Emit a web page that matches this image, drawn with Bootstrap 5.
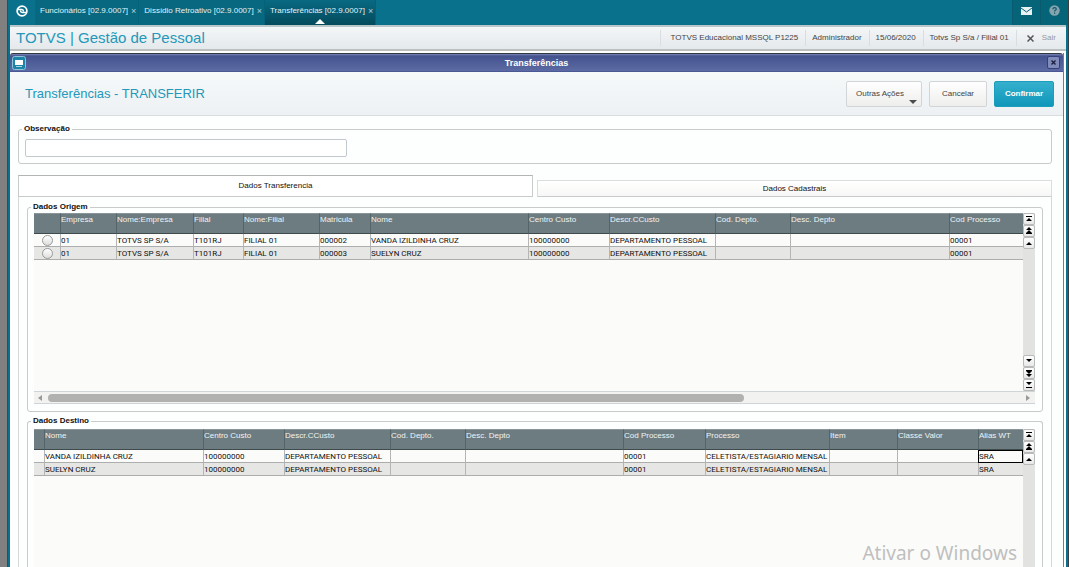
<!DOCTYPE html>
<html lang="pt-BR">
<head>
<meta charset="utf-8">
<meta name="viewport" content="width=device-width, initial-scale=1">
<title>TOTVS | Gestão de Pessoal</title>
<link href="https://cdn.jsdelivr.net/npm/bootstrap@5.3.0/dist/css/bootstrap.min.css" rel="stylesheet">
<style>
  body { font: 8px/10px "Liberation Sans", Arial, sans-serif; color: #222; background: #808080; }
  button { font: inherit; color: inherit; padding: 0; border: 0; background: none; }
  .shell { margin-left: 7px; border-left: 1px solid #3b4a50; border-right: 1px solid #3a3f42; }
  .frame { border: 2px solid #07708c; border-width: 0 2px; background: #fdfefe; }

  /* top bar with the open routines */
  .topbar { height: 25px; margin: 0 -2px; background: #0a718c; color: #e4f2f5; }
  .topbar .logo { width: 27px; }
  .routine { padding: 0 2px 3px 5px; border-right: 1px solid #05627b; background: #08687f; white-space: nowrap; }
  .routine .x { color: #b5d3db; margin-left: 3px; font-size: 9px; }
  .routine.on { background: linear-gradient(#086a82, #044a5c); }
  .routine.on::after { content: ""; position: absolute; left: 50%; bottom: 1px; margin-left: -5px; border: 5px solid transparent; border-top: 0; border-bottom-color: #fff; }
  .topbar .tool { width: 28px; background: #066478; border-left: 1px solid #0a5a6f; }

  .product { height: 26px; border-top: 2px solid #b9c6ca; border-bottom: 2px solid #bcbfc0; background: linear-gradient(#f4f6f7, #e4e9ec); }
  .product h1 { margin-left: 6px; font-size: 15px; line-height: 20px; color: #2398b9; }
  .product span { line-height: 16px; padding: 0 7px 0 6px; border-left: 1px solid #d9dddf; color: #444; white-space: nowrap; }
  .product span.env { padding-left: 10px; }
  .product span.exit { padding: 0 10px; }
  .exit a { color: #999; }

  .win { margin: 2px 2px 0 0; border-right: 1px solid #5c86a0; }
  .wintitle { height: 19px; border-top: 1px solid #32383f; border-bottom: 1px solid #4c5894; border-radius: 3px 3px 0 0; background: linear-gradient(#7c87b6 0, #44528e 2px, #5d6ba4); color: #fff; font-size: 9px; }
  .winicon { width: 14px; height: 14px; margin-left: 2px; }
  .winclose { width: 13px; height: 13px; margin-right: 3px; border: 1px solid #33407c; border-radius: 2px; background: #7f8bb9; }
  .actions { height: 44px; padding: 0 9px 0 15px; border-bottom: 1px solid #d9dddf; background: linear-gradient(#f6f9fa, #edf1f3); }
  .actions h2 { font-size: 13px; line-height: 16px; color: #2398b9; }
  .act-group { gap: 7px; }
  .act { height: 26px; border: 1px solid #d2d4d5; border-radius: 2px; background: linear-gradient(#fff, #eeeeed); color: #444; }
  .act.wide { width: 76px; padding-right: 8px; }
  .act.mid { width: 58px; }
  .act.main { width: 60px; border-color: #1b9dbd; background: linear-gradient(#35b0cd, #0f97ba); color: #fff; }
  .act .caret { position: absolute; right: 4px; bottom: 2px; border: 4px solid transparent; border-bottom: 0; border-top-color: #4c4c4c; }

  .content-area { padding: 8px 11px 0 8px; }
  fieldset.group { border: 1px solid #c9cbcb; border-radius: 3px; }
  .group > legend { float: none; width: auto; margin: 0 0 0 -3px; padding: 0 2px; font-size: 8px; line-height: 10px; font-weight: 700; color: #111; }
  .obs { padding: 5px 6px 6px 2px; }
  .group.obs > legend { margin-left: 1px; }
  .obs input { width: 31.4%; height: 18px; margin-left: 4px; padding: 0 4px; border: 1px solid #c3cacf; border-radius: 2px; background: #fff; }

  .folder { margin-top: 11px; }
  .folder-tab { flex: 1; height: 17px; border: 1px solid #dcdedd; border-bottom-color: #c9cbcb; background: linear-gradient(#fff, #f7f7f6); color: #111; }
  .folder-tab.on { height: 22px; border-color: #b2b5b5 #c9cbcb #c9cbcb; background: #fff; }
  .folder-body { border: 1px solid #d6d8d8; border-width: 0 1px; padding: 5px 8px 0; }

  /* data grids */
  .panel { padding: 1px 7px 7px 6px; }
  .panel + .panel { margin-top: 4px; }
  .panel.open { border-bottom: 0; border-radius: 3px 3px 0 0; padding-top: 3px; padding-bottom: 0; }
  .viewport { background: #fbfbf9; overflow: hidden; }
  .origin-rows { height: 178px; }
  .dg { width: 100%; table-layout: fixed; border-collapse: separate; border-spacing: 0; white-space: nowrap; }
  .dg th { height: 21px; padding: 0; vertical-align: top; font-weight: 400; line-height: 11px; color: #f1f3f3; background: #6d7c80; border-left: 1px solid #53656a; border-top: 1px solid #899598; border-bottom: 1px solid #3f4a4d; overflow: hidden; }
  .dg td { height: 13px; padding: 1px 0 0; font: 8px/11px Roboto, "Liberation Sans", sans-serif; color: #111; border-left: 1px solid #b5b5b5; border-bottom: 1px solid #acaeae; overflow: hidden; }
  .dg tr > :first-child { border-left: 0; }
  .dg td:first-child { padding: 0; text-align: center; }
  .dg tbody tr:nth-child(even) td { background: #e6e6e4; }
  .dg td.cursor { outline: 1px solid #000; outline-offset: -1px; }
  .dg input { appearance: none; display: block; width: 11px; height: 11px; margin: 0 auto; border: 1px solid #999; border-radius: 50%; background: linear-gradient(#fff, #ddd); }
  .vbar { width: 12px; background: #e2e2e1; }
  .vbar button { width: 12px; height: 12px; display: block; border: 1px solid #b9b9b9; border-radius: 2px; background: linear-gradient(#fff, #e8e8e8); }
  .vbar svg, .topbar svg, .winicon svg { display: block; margin: auto; }
  .hbar { height: 13px; border: 1px solid #cfd4d6; border-width: 1px 0; background: #f2f2f1; }
  .hbar .thumb { height: 8px; width: 69.5%; border-radius: 4px; background: #b1b1af; }
  .hbar button { width: 14px; height: 11px; }
  .watermark { position: absolute; right: 51px; bottom: 0; font: 400 19px/27px "Noto Sans", sans-serif; color: #bfbfbf; }
</style>
</head>
<body>
<svg class="d-none">
  <symbol id="first" viewBox="0 0 10 10"><path d="M2 2h6v1H2zM5 4l3 3H2z"/></symbol>
  <symbol id="pgup" viewBox="0 0 10 10"><path d="M5 1l3 3H2zM5 4l3 3H2zM2 7h6v1H2z"/></symbol>
  <symbol id="up" viewBox="0 0 10 10"><path d="M5 4l3 3H2z"/></symbol>
  <symbol id="down" viewBox="0 0 10 10"><path d="M5 6L2 3h6z"/></symbol>
  <symbol id="pgdn" viewBox="0 0 10 10"><path d="M5 9L2 6h6zM5 6L2 3h6zM2 2h6v1H2z"/></symbol>
  <symbol id="last" viewBox="0 0 10 10"><path d="M2 7h6v1H2zM5 5L2 2h6z"/></symbol>
</svg>
<div class="shell vh-100 overflow-hidden position-relative">
  <div class="frame h-100 d-flex flex-column">
    <nav class="topbar d-flex align-items-stretch flex-shrink-0">
      <div class="logo d-flex align-items-center pb-1"><svg width="12" height="12" viewBox="0 0 12 12" fill="none" stroke="#fff"><circle cx="6" cy="6" r="4.900" stroke-width="1.700"/><path d="M2 4.500h3.500q2 0 2 2M10 7.500H6.500q-2 0-2-2" stroke-width="1.300"/></svg></div>
      <div class="routine d-flex align-items-center">Funcionários [02.9.0007] <button class="x" aria-label="Fechar">×</button></div>
      <div class="routine d-flex align-items-center">Dissídio Retroativo [02.9.0007] <button class="x" aria-label="Fechar">×</button></div>
      <div class="routine on d-flex align-items-center position-relative">Transferências [02.9.0007] <button class="x" aria-label="Fechar">×</button></div>
      <button class="tool ms-auto pb-1" aria-label="Mensagens"><svg width="11" height="8" viewBox="0 0 11 8"><path fill="#e8f2f3" d="M0 0h11v8H0z"/><path d="M0 1l5.500 4L11 1" fill="none" stroke="#0a5f74"/></svg></button>
      <button class="tool pb-1" aria-label="Ajuda"><svg width="11" height="11" viewBox="0 0 11 11"><circle cx="5.500" cy="5.500" r="5.200" fill="#86a4ad"/><path d="M3.800 4.200q.2-1.600 1.800-1.600t1.700 1.400q0 .8-1 1.300-.7.400-.7 1.300M5.600 7.500v1.300" fill="none" stroke="#0a5568" stroke-width="1.200"/></svg></button>
    </nav>
    <header class="product d-flex align-items-center flex-shrink-0">
      <h1 class="my-0 fw-normal me-auto text-nowrap">TOTVS | Gestão de Pessoal</h1>
      <span class="env">TOTVS Educacional MSSQL P1225</span><span>Administrador</span><span>15/06/2020</span><span>Totvs Sp S/a / Filial 01</span>
      <span class="exit d-flex align-items-center gap-2"><svg width="7" height="7" viewBox="0 0 7 7"><path d="M.5.500l6 6M6.500.500l-6 6" stroke="#555" stroke-width="1.500"/></svg><a href="#" class="text-decoration-none">Sair</a></span>
    </header>
    <main class="win d-flex flex-column flex-grow-1">
      <div class="wintitle d-flex align-items-center flex-shrink-0">
        <div class="winicon"><svg width="14" height="14" viewBox="0 0 14 14"><rect x=".5" y=".5" width="13" height="13" rx="2" fill="#1c84a8" stroke="#8fc3d6"/><path fill="#fff" d="M3 4h8v5H3z"/><path fill="#a9d3e0" d="M4 10h6v1H4z"/></svg></div>
        <div class="flex-grow-1 text-center fw-bold">Transferências</div>
        <button class="winclose d-flex align-items-center justify-content-center" aria-label="Fechar"><svg width="5" height="5" viewBox="0 0 5 5"><path d="M.5.500l4 4M4.500.500l-4 4" stroke="#1b2040" stroke-width="1.400"/></svg></button>
      </div>
      <div class="actions d-flex align-items-center flex-shrink-0">
        <h2 class="m-0 fw-normal me-auto">Transferências - TRANSFERIR</h2>
        <div class="act-group d-flex">
          <button class="act wide position-relative">Outras Ações<i class="caret"></i></button>
          <button class="act mid">Cancelar</button>
          <button class="act main fw-bold">Confirmar</button>
        </div>
      </div>
      <div class="content-area d-flex flex-column flex-grow-1">
        <fieldset class="group obs">
          <legend><label for="obs">Observação</label></legend>
          <input id="obs" type="text" class="d-block">
        </fieldset>
        <div class="folder d-flex align-items-end gap-1" role="tablist">
          <button class="folder-tab on" role="tab" aria-selected="true">Dados Transferencia</button>
          <button class="folder-tab" role="tab" aria-selected="false">Dados Cadastrais</button>
        </div>
        <div class="folder-body d-flex flex-column flex-grow-1">
          <fieldset class="group panel">
            <legend>Dados Origem</legend>
            <div class="d-flex">
              <div class="viewport origin-rows flex-grow-1">
                <table class="dg">
                  <colgroup><col style="width:26px"><col style="width:56px"><col style="width:77px"><col style="width:50px"><col style="width:76px"><col style="width:51px"><col style="width:158px"><col style="width:81px"><col style="width:106px"><col style="width:75px"><col style="width:159px"><col></colgroup>
                  <thead><tr><th></th><th>Empresa</th><th>Nome:Empresa</th><th>Filial</th><th>Nome:Filial</th><th>Matricula</th><th>Nome</th><th>Centro Custo</th><th>Descr.CCusto</th><th>Cod. Depto.</th><th>Desc. Depto</th><th>Cod Processo</th></tr></thead>
                  <tbody>
                    <tr><td><input type="radio" name="row" aria-label="000002"></td><td>01</td><td>TOTVS SP S/A</td><td>T101RJ</td><td>FILIAL 01</td><td>000002</td><td>VANDA IZILDINHA CRUZ</td><td>100000000</td><td>DEPARTAMENTO PESSOAL</td><td></td><td></td><td>00001</td></tr>
                    <tr><td><input type="radio" name="row" aria-label="000003"></td><td>01</td><td>TOTVS SP S/A</td><td>T101RJ</td><td>FILIAL 01</td><td>000003</td><td>SUELYN CRUZ</td><td>100000000</td><td>DEPARTAMENTO PESSOAL</td><td></td><td></td><td>00001</td></tr>
                  </tbody>
                </table>
              </div>
              <div class="vbar d-flex flex-column justify-content-between">
                <div>
                  <button aria-label="Primeiro"><svg width="10" height="10"><use href="#first"/></svg></button>
                  <button aria-label="Página acima"><svg width="10" height="10"><use href="#pgup"/></svg></button>
                  <button aria-label="Acima"><svg width="10" height="10"><use href="#up"/></svg></button>
                </div>
                <div>
                  <button aria-label="Abaixo"><svg width="10" height="10"><use href="#down"/></svg></button>
                  <button aria-label="Página abaixo"><svg width="10" height="10"><use href="#pgdn"/></svg></button>
                  <button aria-label="Último"><svg width="10" height="10"><use href="#last"/></svg></button>
                </div>
              </div>
            </div>
            <div class="hbar d-flex align-items-center">
              <button aria-label="Esquerda"><svg class="d-block ms-1" width="4" height="6" viewBox="0 0 4 6"><path d="M4 0v6L0 3z" fill="#999"/></svg></button>
              <div class="thumb"></div>
              <button class="ms-auto" aria-label="Direita"><svg class="d-block mx-auto" width="4" height="6" viewBox="0 0 4 6"><path d="M0 0v6l4-3z" fill="#999"/></svg></button>
            </div>
          </fieldset>
          <fieldset class="group panel open d-flex flex-column flex-grow-1">
            <legend>Dados Destino</legend>
            <div class="d-flex flex-grow-1">
              <div class="viewport flex-grow-1">
                <table class="dg">
                  <colgroup><col style="width:10px"><col style="width:159px"><col style="width:81px"><col style="width:106px"><col style="width:75px"><col style="width:158px"><col style="width:82px"><col style="width:124px"><col style="width:68px"><col style="width:81px"><col></colgroup>
                  <thead><tr><th></th><th>Nome</th><th>Centro Custo</th><th>Descr.CCusto</th><th>Cod. Depto.</th><th>Desc. Depto</th><th>Cod Processo</th><th>Processo</th><th>Item</th><th>Classe Valor</th><th>Alias WT</th></tr></thead>
                  <tbody>
                    <tr><td></td><td>VANDA IZILDINHA CRUZ</td><td>100000000</td><td>DEPARTAMENTO PESSOAL</td><td></td><td></td><td>00001</td><td>CELETISTA/ESTAGIARIO MENSAL</td><td></td><td></td><td class="cursor">SRA</td></tr>
                    <tr><td></td><td>SUELYN CRUZ</td><td>100000000</td><td>DEPARTAMENTO PESSOAL</td><td></td><td></td><td>00001</td><td>CELETISTA/ESTAGIARIO MENSAL</td><td></td><td></td><td>SRA</td></tr>
                  </tbody>
                </table>
              </div>
              <div class="vbar">
                <button aria-label="Primeiro"><svg width="10" height="10"><use href="#first"/></svg></button>
                <button aria-label="Página acima"><svg width="10" height="10"><use href="#pgup"/></svg></button>
                <button aria-label="Acima"><svg width="10" height="10"><use href="#up"/></svg></button>
              </div>
            </div>
          </fieldset>
        </div>
      </div>
    </main>
  </div>
  <div class="watermark">Ativar o Windows</div>
</div>
<script src="https://cdn.jsdelivr.net/npm/bootstrap@5.3.0/dist/js/bootstrap.bundle.min.js"></script>
</body>
</html>
